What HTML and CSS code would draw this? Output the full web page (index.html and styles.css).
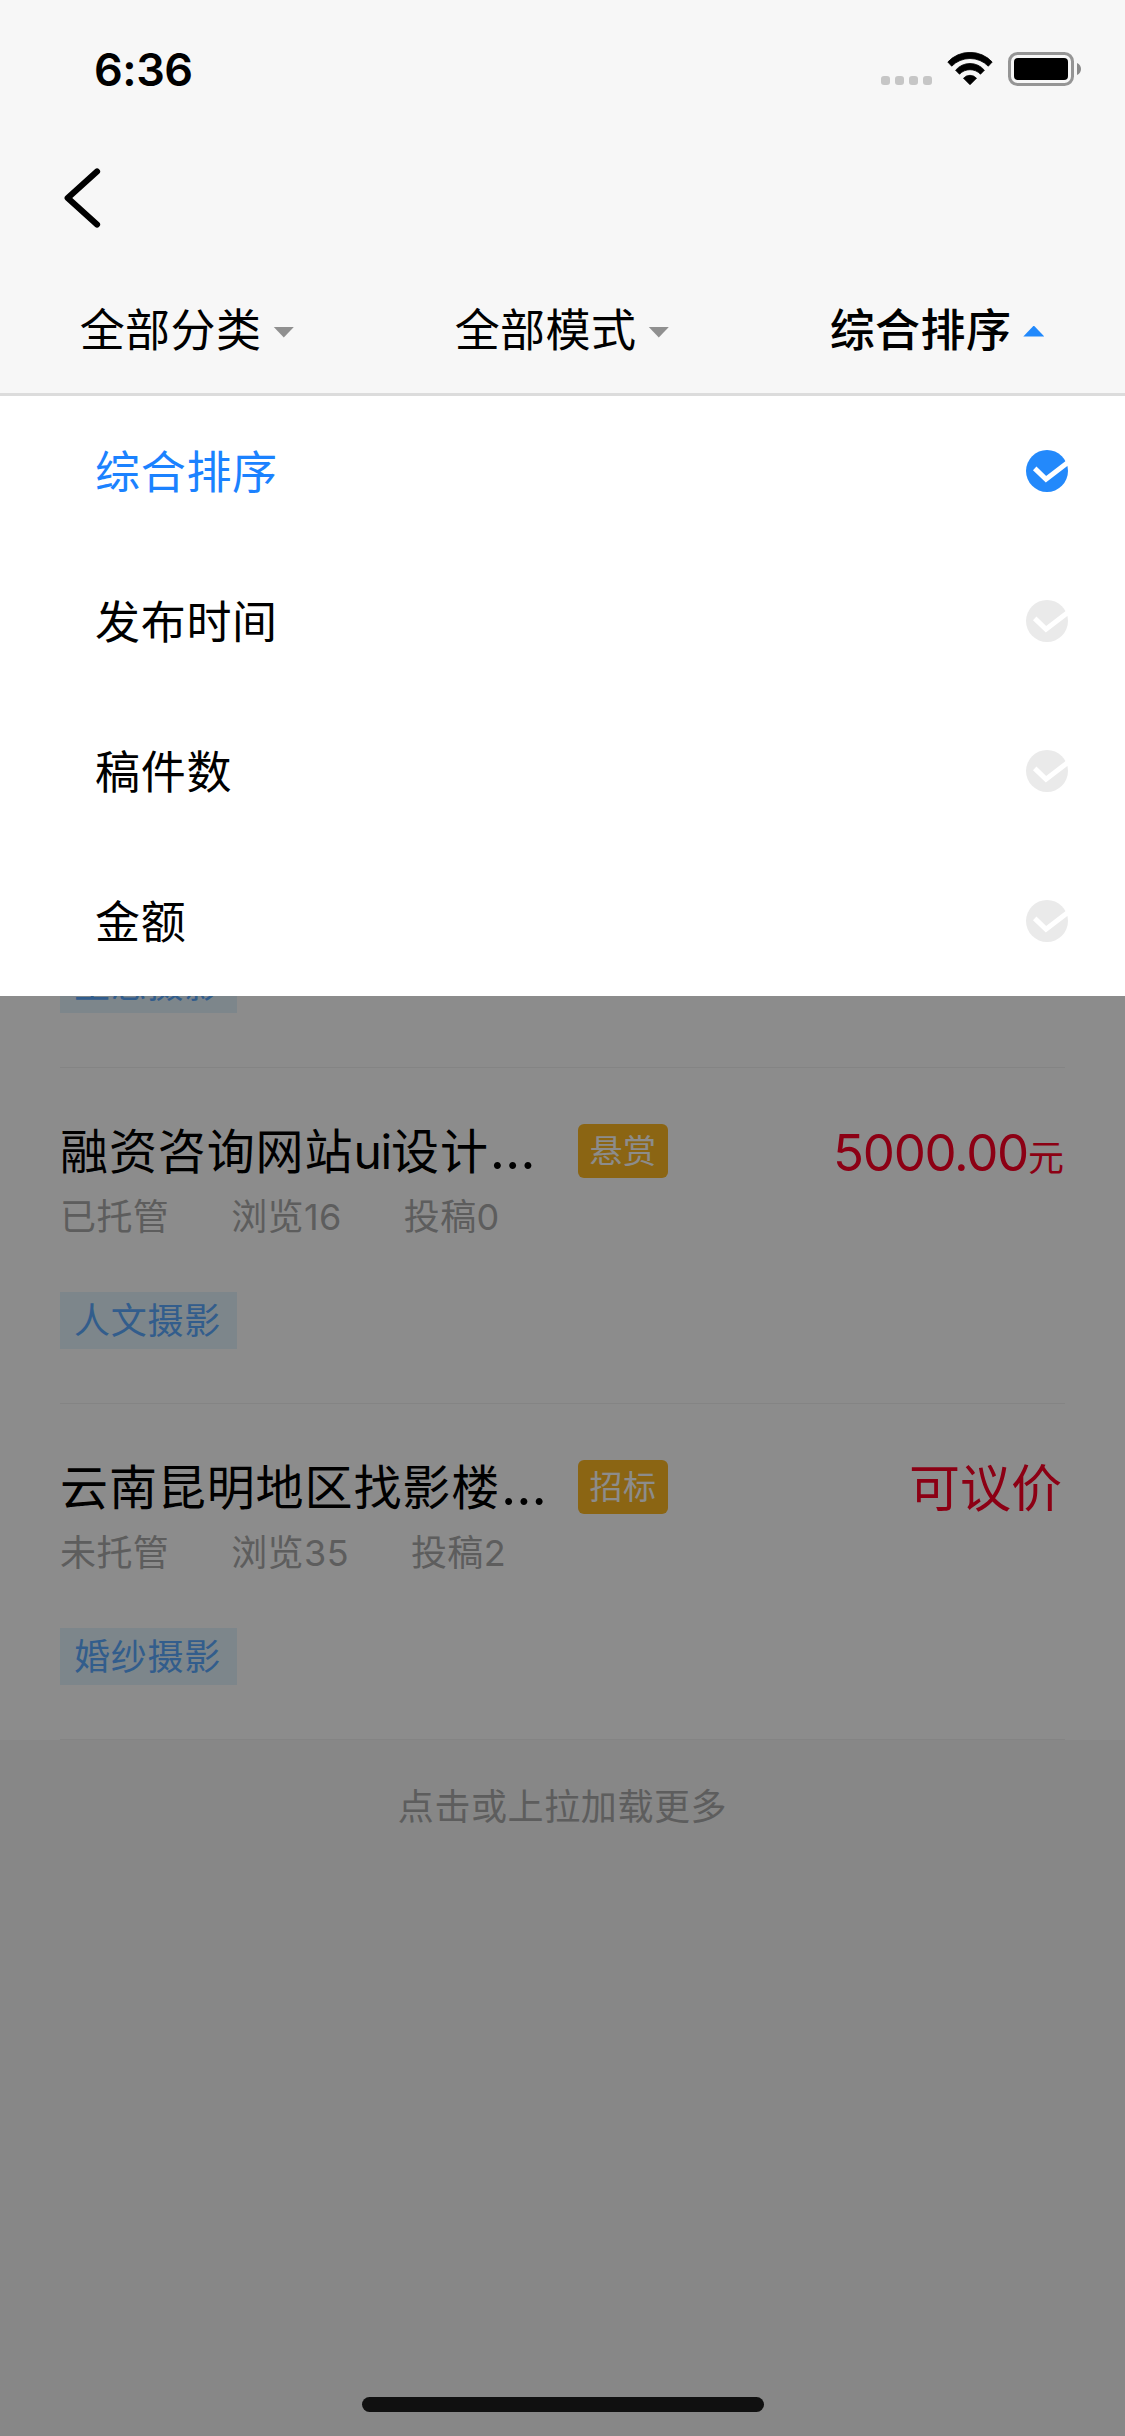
FILE: index.html
```html
<!DOCTYPE html>
<html lang="zh-CN">
<head>
<meta charset="utf-8">
<title>任务列表</title>
<link rel="stylesheet" href="styles.css">
</head>
<body>
<div class="screen">
  <header class="header">
    <div class="status">
      <span class="time">6:36</span>
      <div class="status-icons">
        <div class="signal"><i></i><i></i><i></i><i></i></div>
        <svg class="wifi" viewBox="0 0 46 34" width="46" height="34">
          <path d="M.8 10A30.300 30.300 0 0 1 45.200 10L41.300 14.200A25.600 25.600 0 0 0 4.700 14.200Z"/>
          <path d="M8.600 18.200A18.800 18.800 0 0 1 37.400 18.200L33.500 22.200A14.500 14.500 0 0 0 12.500 22.200Z"/>
          <path d="M16.500 26.200A8.800 8.800 0 0 1 29.500 26.200L23 32.700Z"/>
        </svg>
        <svg class="battery" viewBox="0 0 74 34" width="74" height="34">
          <rect x="1.500" y="1.500" width="63" height="31" rx="8" fill="none" stroke="#959595" stroke-width="3"/>
          <rect x="6" y="6" width="54" height="22" rx="4"/>
          <path d="M69 11c2.700 1.200 4 3.400 4 6s-1.300 4.800-4 6z" fill="#8a8a8a"/>
        </svg>
      </div>
    </div>
    <nav class="navbar">
      <svg viewBox="0 0 40 60" width="40" height="60">
        <path d="M35 3.500L5.700 30L35 56.500" fill="none" stroke="#000" stroke-width="6.200" stroke-linecap="round" stroke-linejoin="round"/>
      </svg>
    </nav>
    <div class="tabs">
      <div class="tab"><span>全部分类</span><i class="arrow"></i></div>
      <div class="tab"><span>全部模式</span><i class="arrow"></i></div>
      <div class="tab tab-active"><span>综合排序</span><i class="arrow"></i></div>
    </div>
  </header>
  <main class="content">
    <section class="list">
      <article class="card">
        <span class="tag">生态摄影</span>
      </article>
      <article class="card">
        <div class="row">
          <h2 class="title">融资咨询网站<span class="latin">ui</span>设计<span class="dots">…</span></h2>
          <span class="badge">悬赏</span>
          <span class="price price-amount"><span class="amount">5000.00</span><small>元</small></span>
        </div>
        <div class="meta"><span>已托管</span><span>浏览16</span><span>投稿0</span></div>
        <span class="tag">人文摄影</span>
      </article>
      <article class="card">
        <div class="row">
          <h2 class="title">云南昆明地区找影楼<span class="dots">…</span></h2>
          <span class="badge">招标</span>
          <span class="price">可议价</span>
        </div>
        <div class="meta"><span>未托管</span><span>浏览35</span><span>投稿2</span></div>
        <span class="tag">婚纱摄影</span>
      </article>
    </section>
    <p class="more">点击或上拉加载更多</p>
    <div class="overlay">
      <ul class="menu">
        <li class="option option-active"><span>综合排序</span>
          <svg class="check" viewBox="0 0 42 42" width="42" height="42"><circle cx="21" cy="21" r="21"/><path d="M8.700 18.400l11.300 10.900L43.500 11.200"/></svg></li>
        <li class="option"><span>发布时间</span>
          <svg class="check" viewBox="0 0 42 42" width="42" height="42"><circle cx="21" cy="21" r="21"/><path d="M8.700 18.400l11.300 10.900L43.500 11.200"/></svg></li>
        <li class="option"><span>稿件数</span>
          <svg class="check" viewBox="0 0 42 42" width="42" height="42"><circle cx="21" cy="21" r="21"/><path d="M8.700 18.400l11.300 10.900L43.500 11.200"/></svg></li>
        <li class="option"><span>金额</span>
          <svg class="check" viewBox="0 0 42 42" width="42" height="42"><circle cx="21" cy="21" r="21"/><path d="M8.700 18.400l11.300 10.900L43.500 11.200"/></svg></li>
      </ul>
    </div>
  </main>
  <div class="home-indicator"></div>
</div>
</body>
</html>
```
FILE: styles.css
```css
* { box-sizing: border-box; margin: 0; padding: 0; }

body {
  font-family: Inter, "Noto Sans CJK SC", sans-serif;
  color: #000;
  background: #f6f6f6;
}

.screen {
  position: relative;
  width: 1125px;
  height: 2436px;
  display: flex;
  flex-direction: column;
  overflow: hidden;
}

.header {
  height: 396px;
  background: #f7f7f7;
  border-bottom: 3px solid #dcdcdc;
}

.status {
  height: 132px;
  display: flex;
  justify-content: space-between;
  padding: 52px 43px 0 94px;
}
.time {
  font-size: 45px;
  font-weight: 600;
  letter-spacing: -0.5px;
  line-height: 35px;
}
.status-icons { display: flex; align-items: flex-start; }
.signal { display: flex; gap: 5px; padding-top: 24px; margin-right: 15px; }
.signal i { width: 9px; height: 9px; border-radius: 3px; background: #c6c6c6; }
.wifi { margin-right: 15px; stroke: #000; stroke-width: 0.8; stroke-linejoin: round; }

.navbar {
  height: 132px;
  display: flex;
  align-items: center;
  padding-left: 62px;
}

.tabs { height: 129px; display: flex; }
.tab {
  flex: 1;
  display: flex;
  align-items: center;
  justify-content: center;
  gap: 12px;
  font-size: 45px;
  letter-spacing: 0.4px;
  line-height: 60px;
  padding-right: 1px;
}
.tab span { padding-top: 5px; }
.tab-active { font-weight: 500; }
.arrow {
  width: 21px;
  height: 11px;
  margin-top: 7px;
  background: #909090;
  clip-path: polygon(0 0, 100% 0, 50% 100%);
}
.tab-active .arrow {
  margin-top: 5px;
  background: #2189fc;
  clip-path: polygon(0 100%, 100% 100%, 50% 0);
}

.content { position: relative; flex: 1; }

.list { padding-top: 336px; background: #fff; }

.card {
  height: 336px;
  margin: 0 60px;
  border-bottom: 1px solid #f0f0f0;
  display: flex;
  flex-direction: column;
  align-items: flex-start;
  justify-content: flex-end;
  padding-bottom: 54px;
}
.row { width: 100%; display: flex; align-items: center; height: 60px; }
.title {
  width: 518px;
  height: 60px;
  font-size: 48px;
  font-weight: 400;
  letter-spacing: 0.9px;
  line-height: 62px;
  white-space: nowrap;
}
.latin { letter-spacing: -1.2px; }
.dots { margin-left: 1px; font-size: 53px; line-height: 1; }
.badge {
  width: 90px;
  height: 54px;
  border-radius: 6px;
  background: #fdb824;
  color: #fff;
  font-size: 33px;
  letter-spacing: 0.5px;
  line-height: 54px;
  text-align: center;
}
.price {
  height: 60px;
  margin-left: auto;
  padding-right: 3px;
  font-size: 51px;
  line-height: 64px;
  color: #ff0026;
}
.price-amount { padding-right: 1px; }
.amount { letter-spacing: -1.3px; }
.price small { font-size: 36px; }

.meta {
  display: flex;
  gap: 62px;
  height: 54px;
  margin: 7px 0 50px;
  font-size: 36px;
  letter-spacing: 0.4px;
  line-height: 58px;
  color: #aaa;
}
.tag {
  height: 57px;
  padding: 0 16px 0 14px;
  font-size: 36px;
  letter-spacing: 0.75px;
  line-height: 58px;
  color: #5caaff;
  background: #e3f4fd;
}

.more {
  padding-top: 40px;
  text-align: center;
  font-size: 36px;
  letter-spacing: 0.6px;
  line-height: 54px;
  color: #aaa;
}

.overlay { position: absolute; inset: 0; background: rgba(0, 0, 0, 0.45); }

.menu { list-style: none; background: #fff; }
.option {
  height: 150px;
  display: flex;
  align-items: center;
  justify-content: space-between;
  padding: 0 57px 0 95px;
  font-size: 45px;
  letter-spacing: 0.7px;
  line-height: 60px;
}
.option span { padding-top: 3px; }
.option-active { color: #1b82ff; }
.check circle { fill: #eaeaea; }
.check path { fill: none; stroke: #fff; stroke-width: 5; }
.option-active .check circle { fill: #2389fb; }

.home-indicator {
  position: absolute;
  left: 362px;
  bottom: 24px;
  width: 402px;
  height: 15px;
  border-radius: 8px;
  background: #101010;
}
```
